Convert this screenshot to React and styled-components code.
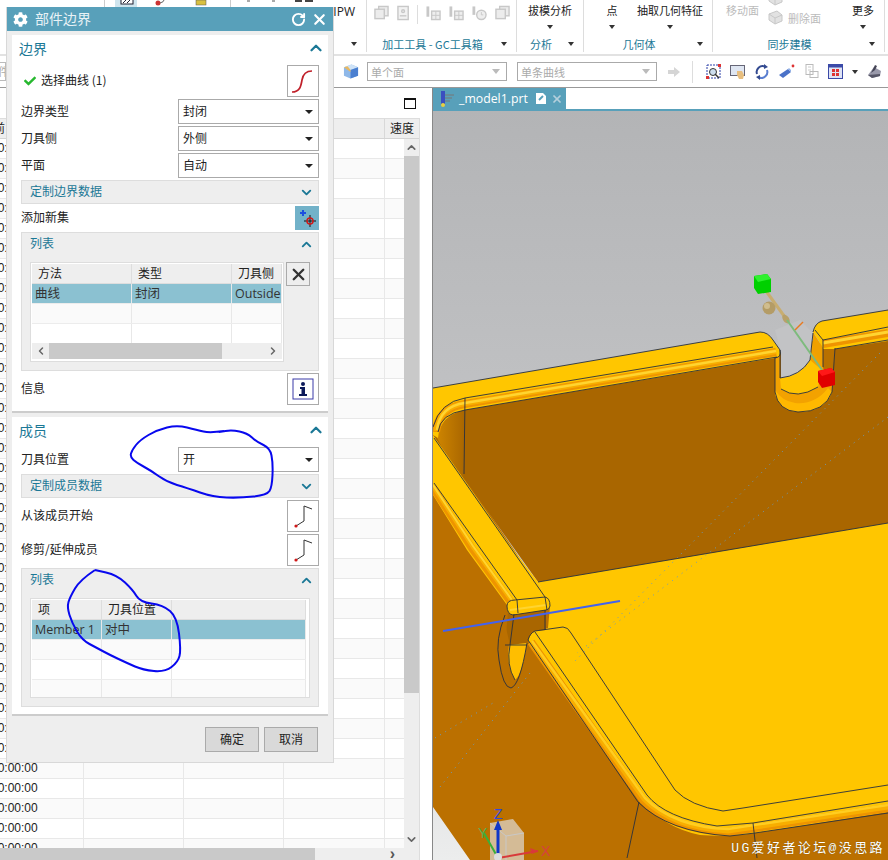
import React from 'react'
import styled, { createGlobalStyle } from 'styled-components'
import { FaCog, FaCheck } from 'react-icons/fa'
import { ChevronUp, ChevronDown, RotateCw, X } from 'lucide-react'

const CJK = `"Noto Sans CJK SC", "Open Sans", sans-serif`
const TEAL = '#58a0ba'
const HEAD = '#1b7896'

const smooth = pts => {
  let d = `M${pts[0][0]},${pts[0][1]}`
  for (let i = 1; i < pts.length - 1; i++) {
    const mx = (pts[i][0] + pts[i + 1][0]) / 2
    const my = (pts[i][1] + pts[i + 1][1]) / 2
    d += ` Q${pts[i][0]},${pts[i][1]} ${mx},${my}`
  }
  const last = pts[pts.length - 1]
  return d + ` L${last[0]},${last[1]}`
}

const ring1 = [[224,431],[210,433],[197,430],[177,425],[157,430],[140,440],[132,450],[130,457],[137,463],[150,470],[167,482],[187,488],[213,497],[240,498],[267,495],[272,487],[273,463],[270,448],[257,442],[247,433],[232,430],[219,432]]
const ring2 = [[95,570],[80,580],[70,597],[67,607],[72,623],[82,640],[97,648],[110,655],[127,663],[143,670],[165,672],[178,662],[181,650],[177,617],[163,605],[140,602],[133,590],[117,575],[95,570]]

function App() {
  const bgRows = Array.from({ length: 36 })
  return (
    <Page>
      <GlobalStyle />
      <Ribbon>
        <RibbonGroup $w={367}>
          <RibbonBody>
            <TopFragments width="250" height="7" viewBox="100 0 250 7">
              <rect x="115" y="0" width="22" height="7" fill="#cfe5ee" />
              <rect x="121" y="-3" width="12" height="7" fill="#fff" stroke="#223" />
              <path d="M123,3 L126,0 M127,3 L130,0" stroke="#223" />
              <circle cx="158" cy="3" r="2.5" fill="#c33" />
              <path d="M160,3 Q164,2 164,0" stroke="#666" fill="none" />
              <rect x="196" y="0" width="10" height="5" fill="#d8c040" stroke="#555" strokeWidth=".5" />
              <path d="M230.5,0 V7 M104.5,0 V7" stroke="#ccc" />
              <rect x="247" y="0" width="3" height="2" fill="#aaa" />
              <rect x="272" y="0" width="3" height="2" fill="#aaa" />
              <rect x="295" y="0" width="7" height="2" fill="#444" />
              <rect x="305" y="0" width="8" height="2" fill="#444" />
            </TopFragments>
            <IpwLabel>IPW</IpwLabel>
          </RibbonBody>
          <RibbonFoot><Caret /></RibbonFoot>
        </RibbonGroup>

        <RibbonGroup $w={150}>
          <RibbonIcons>
            <GhostPages /><GhostDoc /><IconSep /><GhostGrid /><GhostGrid /><GhostClock /><GhostPages />
          </RibbonIcons>
          <RibbonFoot><FootLabel>加工工具 - GC工具箱</FootLabel><Caret /></RibbonFoot>
        </RibbonGroup>

        <RibbonGroup $w={67}>
          <RibbonBody $center><RibbonCmd>拔模分析<Caret /></RibbonCmd></RibbonBody>
          <RibbonFoot><FootLabel>分析</FootLabel><Caret /></RibbonFoot>
        </RibbonGroup>

        <RibbonGroup $w={129}>
          <RibbonBody $pad={3}>
            <RibbonCmd $w={50}>点<Caret /></RibbonCmd>
            <RibbonCmd>抽取几何特征<Caret /></RibbonCmd>
          </RibbonBody>
          <RibbonFoot><FootLabel>几何体</FootLabel><Caret /></RibbonFoot>
        </RibbonGroup>

        <RibbonGroup $w={172}>
          <RibbonBody $pad={13}>
            <RibbonCmd $muted>移动面</RibbonCmd>
            <MutedStack>
              <MutedLine><GhostSmall /></MutedLine>
              <MutedLine><GhostSmall />删除面</MutedLine>
            </MutedStack>
            <RibbonCmd $ml={31}>更多<Caret /></RibbonCmd>
          </RibbonBody>
          <RibbonFoot><FootLabel>同步建模</FootLabel><Caret /></RibbonFoot>
        </RibbonGroup>
      </Ribbon>

      <Toolbar>
        <ClippedCombo>部件</ClippedCombo>
        <ToolCube width="16" height="17" viewBox="0 0 17 17">
          <path d="M1,4 L9,1 L16,4 L16,13 L8,16 L1,13 Z" fill="#8fb8e8" />
          <path d="M1,4 L8,7 L16,4 L9,1 Z" fill="#cfe3f7" />
          <path d="M8,7 L16,4 V13 L8,16 Z" fill="#4a7fd0" />
          <path d="M1,4 L5,3 L8,7 V9 Z" fill="#e8b860" />
        </ToolCube>
        <FilterCombo>单个面<ComboArrow /></FilterCombo>
        <FilterCombo>单条曲线<ComboArrow /></FilterCombo>
        <ToolArrow width="12" height="12" viewBox="0 0 12 12"><path d="M0,4 H6 V1 L12,6 L6,11 V8 H0 Z" fill="#d5d5d5" /></ToolArrow>
        <ToolSep />
        <ToolIcons>
          <svg width="15" height="15" viewBox="0 0 15 15"><rect x="1" y="1" width="13" height="13" fill="#fff" stroke="#2b3fa8" strokeDasharray="2 1" /><circle cx="7" cy="8" r="3.5" fill="#cde" stroke="#333" /><path d="M9,10 L13,14" stroke="#333" strokeWidth="1.5" /><rect x="12" y="0" width="3" height="3" fill="#d33" /><rect x="0" y="12" width="3" height="3" fill="#d33" /></svg>
          <svg width="15" height="15" viewBox="0 0 15 15"><rect x="0.5" y="1.5" width="14" height="10" fill="#dfe6f2" stroke="#667" /><path d="M7,7 L12,7 L14,11 L13,15 H9 L7,11 Z" fill="#e8bf80" /></svg>
          <svg width="16" height="16" viewBox="0 0 16 16" fill="none"><path d="M3,10 A6,6 0 0 1 11,2.5" stroke="#334a90" strokeWidth="2" /><path d="M13,6 A6,6 0 0 1 5,13.5" stroke="#5a7fd0" strokeWidth="2" /><path d="M10,0 L14,3 L10,5 Z M6,16 L2,13 L6,11 Z" fill="#334a90" /></svg>
          <svg width="16" height="15" viewBox="0 0 16 15"><path d="M0,11 L9,5 L12,8 L4,14 Z" fill="#4a72c8" /><path d="M9,5 L12,8 L12,6 L10,4 Z" fill="#8fb0e8" /><circle cx="14" cy="2" r="1.4" fill="#d33" /></svg>
          <svg width="15" height="15" viewBox="0 0 15 15" fill="none"><rect x="2" y="0.5" width="7" height="10" stroke="#bbb" /><rect x="6" y="7.5" width="8" height="6" stroke="#bbb" /><path d="M4,3 H7 M4,6 H7" stroke="#ccc" /></svg>
          <svg width="15" height="15" viewBox="0 0 15 15"><rect x="0.5" y="0.5" width="14" height="14" fill="#dfe4f5" stroke="#3b4aa8" /><rect x="1" y="1" width="13" height="2.5" fill="#3b4aa8" /><rect x="4" y="5" width="3" height="3" fill="#d33" /><rect x="8" y="5" width="3" height="3" fill="#d33" /><rect x="4" y="9" width="3" height="3" fill="#d33" /><rect x="8" y="9" width="3" height="3" fill="#d33" /></svg>
          <Caret />
          <svg width="15" height="15" viewBox="0 0 15 15"><path d="M1,11 L7,3 L14,7 L13,12 L5,14 Z" fill="#99a" /><path d="M4,9 L8,1 L10,2 L8,6 Z" fill="#445" /><path d="M1,11 L13,10 L13,12 L5,14 Z" fill="#556" /></svg>
        </ToolIcons>
      </Toolbar>

      <Main>
        <NavPanel>
          <PanelBar><WindowIcon /></PanelBar>
          <BgTable>
            <BgHeader>
              <BgHeadCell $clip>前</BgHeadCell><BgHeadCell /><BgHeadCell /><BgHeadCell /><BgHeadCell>速度</BgHeadCell>
            </BgHeader>
            <BgMiddle>
              <BgRows>
                {bgRows.map((_, i) => (
                  <BgRow key={i} $odd={i % 2 === 1}>
                    <BgCell><BgTime>00:00:00</BgTime></BgCell><BgCell /><BgCell /><BgCell /><BgCell />
                  </BgRow>
                ))}
              </BgRows>
              <VScroll>
                <ScrollBtn><ChevronUp size={13} strokeWidth={3} color="#666" /></ScrollBtn>
                <VThumb />
                <ScrollBtn $end><ChevronDown size={13} strokeWidth={3} color="#666" /></ScrollBtn>
              </VScroll>
            </BgMiddle>
            <HScroll>
              <HThumb $w={315} />
              <ScrollEnd>›</ScrollEnd>
            </HScroll>
          </BgTable>
        </NavPanel>

        <GraphicsPane>
          <TabStrip>
            <ModelTab>
              <svg width="17" height="18" viewBox="0 0 17 18"><rect x="3" y="1" width="4" height="13" fill="#3a4fc0" /><path d="M7,5 H16 M7,8 H14 M7,11 H12" stroke="#777" /><circle cx="5" cy="15" r="2" fill="#e8d040" /></svg>
              <TabName>_model1.prt</TabName>
              <TabDoc width="10" height="11" viewBox="0 0 10 11"><path d="M0,0 H7 L10,3 V11 H0 Z" fill="#fff" /><path d="M3,7 L7,3" stroke={TEAL} strokeWidth="2" /></TabDoc>
              <X size={12} strokeWidth={3.5} color="#b5d0dc" />
            </ModelTab>
          </TabStrip>
          <TabRule />
          <Scene>
            <Model />
            <Watermark>UG爱好者论坛@没思路</Watermark>
          </Scene>
        </GraphicsPane>
      </Main>

      <Dialog>
        <TitleBar>
          <FaCog size={15} color="#fff" />
          <DialogTitle>部件边界</DialogTitle>
          <TitleActions>
            <RotateCw size={15} strokeWidth={3} color="#fff" />
            <X size={17} strokeWidth={3} color="#fff" />
          </TitleActions>
        </TitleBar>
        <DialogBody>
          <Section $pad={6}>
            <SectionHead><span>边界</span><SectionChevron size={18} strokeWidth={3} color={HEAD} /></SectionHead>
            <PickRow>
              <Selected><FaCheck size={12} color="#27b82f" /><RowText>选择曲线 (1)</RowText></Selected>
              <IconButton><CurveIcon /></IconButton>
            </PickRow>
            <FieldRow label="边界类型" value="封闭" />
            <FieldRow label="刀具侧" value="外侧" />
            <FieldRow label="平面" value="自动" />
            <SubHead><RowText>定制边界数据</RowText><ChevronDown size={15} strokeWidth={3} color={HEAD} /></SubHead>
            <AddRow>
              <RowText>添加新集</RowText>
              <AddButton>
                <svg width="20" height="20" viewBox="0 0 20 20" fill="none">
                  <path d="M3,5 H9 M6,2 V8" stroke="#1c4fe0" strokeWidth="2" />
                  <path d="M13,7 V19 M7,13 H19" stroke="#111" />
                  <circle cx="13" cy="13" r="3" stroke="#d01818" strokeWidth="1.5" />
                </svg>
              </AddButton>
            </AddRow>
            <ListGroup>
              <GroupHead><RowText>列表</RowText><ChevronUp size={15} strokeWidth={3} color={HEAD} /></GroupHead>
              <ListBody>
                <DataTable
                  $w={254}
                  cols="100px 100px 50px"
                  head={['方法', '类型', '刀具侧']}
                  rows={[['曲线', '封闭', 'Outside'], ['', '', ''], ['', '', '']]}
                  scroll
                />
                <DeleteButton><X size={19} strokeWidth={3} color="#333" /></DeleteButton>
              </ListBody>
            </ListGroup>
            <PickRow>
              <RowText>信息</RowText>
              <IconButton>
                <svg width="22" height="22" viewBox="0 0 22 22">
                  <rect x="1" y="1" width="20" height="20" fill="#fff" stroke="#3b3ba8" />
                  <circle cx="11" cy="6" r="2" fill="#0c1a5a" />
                  <path d="M8,9 H13 V16 H15 V18 H7 V16 H9.5 V11 H8 Z" fill="#0c1a5a" />
                </svg>
              </IconButton>
            </PickRow>
          </Section>
          <Section $pad={7}>
            <SectionHead><span>成员</span><SectionChevron size={18} strokeWidth={3} color={HEAD} /></SectionHead>
            <FieldRow label="刀具位置" value="开" />
            <SubHead><RowText>定制成员数据</RowText><ChevronDown size={15} strokeWidth={3} color={HEAD} /></SubHead>
            <PickRow><RowText>从该成员开始</RowText><IconButton><StepIcon /></IconButton></PickRow>
            <PickRow><RowText>修剪/延伸成员</RowText><IconButton><StepIcon /></IconButton></PickRow>
            <ListGroup>
              <GroupHead><RowText>列表</RowText><ChevronUp size={15} strokeWidth={3} color={HEAD} /></GroupHead>
              <ListBody>
                <DataTable
                  $w={280}
                  cols="70px 70px 134px"
                  head={['项', '刀具位置', '']}
                  rows={[['Member 1', '对中', ''], ['', '', ''], ['', '', ''], ['', '', '']]}
                />
              </ListBody>
            </ListGroup>
          </Section>
        </DialogBody>
        <DialogFoot>
          <FootButton>确定</FootButton>
          <FootButton>取消</FootButton>
        </DialogFoot>
      </Dialog>

      <Scribble width="888" height="860" viewBox="0 0 888 860" fill="none">
        <path d={smooth(ring1)} />
        <path d={smooth(ring2)} />
      </Scribble>
    </Page>
  )
}

export default App

function FieldRow({ label, value }) {
  return (
    <Field>
      <RowText>{label}</RowText>
      <SelectBox>{value}<SelectCaret /></SelectBox>
    </Field>
  )
}

function DataTable({ $w, cols, head, rows, scroll }) {
  return (
    <TableFrame $w={$w}>
      <TableRow $cols={cols} $head>
        {head.map((h, i) => <HeadCell key={i}>{h}</HeadCell>)}
      </TableRow>
      {rows.map((r, i) => (
        <TableRow key={i} $cols={cols} $sel={i === 0} $odd={i % 2 === 1}>
          {r.map((c, j) => <BodyCell key={j}>{c}</BodyCell>)}
        </TableRow>
      ))}
      {scroll && (
        <TableScroll>
          <ChevronDown size={12} strokeWidth={3} color="#666" style={{ transform: 'rotate(90deg)' }} />
          <HThumb $w={173} />
          <ScrollRight><ChevronDown size={12} strokeWidth={3} color="#666" style={{ transform: 'rotate(-90deg)' }} /></ScrollRight>
        </TableScroll>
      )}
    </TableFrame>
  )
}

function GhostPages() {
  return (
    <svg width="16" height="16" viewBox="0 0 16 16" fill="#ececec" stroke="#c8c8c8" strokeWidth="1.5">
      <rect x="5" y="1" width="10" height="10" />
      <rect x="1" y="4" width="10" height="10" />
    </svg>
  )
}

function GhostDoc() {
  return (
    <svg width="13" height="16" viewBox="0 0 13 16" fill="#f2f2f2" stroke="#c8c8c8" strokeWidth="1.5">
      <rect x="1" y="1" width="11" height="14" />
      <circle cx="6.5" cy="6" r="1.5" />
      <path d="M3,11 H10" />
    </svg>
  )
}

function GhostGrid() {
  return (
    <svg width="16" height="16" viewBox="0 0 16 16" fill="none" stroke="#c8c8c8" strokeWidth="1.5">
      <path d="M2,1 V12" strokeWidth="3" />
      <rect x="6" y="6" width="9" height="9" fill="#eee" />
      <path d="M6,10.5 H15 M10.5,6 V15" strokeWidth="1" />
    </svg>
  )
}

function GhostClock() {
  return (
    <svg width="16" height="16" viewBox="0 0 16 16" fill="none" stroke="#c8c8c8" strokeWidth="1.5">
      <path d="M2,1 V10" strokeWidth="3" />
      <circle cx="10" cy="10" r="5" fill="#eee" />
      <path d="M10,7 V10 H12" strokeWidth="1" />
    </svg>
  )
}

function GhostSmall() {
  return (
    <GhostSmallSvg width="15" height="15" viewBox="0 0 15 15" fill="#e2e2e2" stroke="#c8c8c8">
      <path d="M1,4 L9,1 L14,5 L14,11 L7,14 L1,10 Z" />
      <path d="M1,4 L7,8 L14,5 M7,8 V14" />
    </GhostSmallSvg>
  )
}

function CurveIcon() {
  return (
    <svg width="24" height="24" viewBox="0 0 24 24" fill="none">
      <path d="M1,23 C9,23 10,17 11,11 C12,5 15,2 21,2" stroke="#c0202a" strokeWidth="1.7" />
    </svg>
  )
}

function StepIcon() {
  return (
    <svg width="24" height="24" viewBox="0 0 24 24" fill="none">
      <path d="M5,22 L13,17 V2 L21,5" stroke="#333" strokeWidth="1" />
      <circle cx="5" cy="22" r="1.6" fill="#d01818" />
    </svg>
  )
}

function Model() {
  const line = '#28303f'
  const wall = '#a96600'
  const outer = '#bb7000'
  const yellow = '#ffc600'
  return (
    <SceneSvg viewBox="433 111 455 749" preserveAspectRatio="none">
      <defs>
        <linearGradient id="bg" x1="0" y1="0" x2="0" y2="1">
          <stop offset="0" stopColor="#b3b4b6" />
          <stop offset=".5" stopColor="#c4c5c7" />
          <stop offset="1" stopColor="#eceded" />
        </linearGradient>
        <linearGradient id="corner" x1="0" y1="0" x2="1" y2="0">
          <stop offset="0" stopColor="#cf8600" />
          <stop offset="1" stopColor="#a96600" />
        </linearGradient>
      </defs>
      <rect x="433" y="111" width="455" height="749" fill="url(#bg)" />

      {/* walls */}
      <path d="M433,430 L548,600 L640,798 L888,790 V860 H470 L433,807 Z" fill={outer} />
      <path d="M433,435 L465,405 L888,335 V530 L538,582 Z" fill={wall} />
      <path d="M436,436 Q440,414 465,410 L464,490 Z" fill="url(#corner)" />

      {/* floor and front rim */}
      <path d="M538,582 L888,523 V812 L755,833 Q730,837 700,835 Q665,828 640,800 L528,640 Q530,633 535,631 L548,628 L550,606 Z" fill={yellow} />
      <path d="M531,642 L643,800 Q672,830 728,832 L888,808" fill="none" stroke="#ee9400" strokeWidth="8" />
      <path d="M531,642 L644,799 Q673,828 728,831 L888,807" fill="none" stroke="#f8ae00" strokeWidth="5" />
      <path d="M532,641 L645,798 Q674,827 728,829 L888,805" fill="none" stroke="#ffcd20" strokeWidth="2.5" />

      {/* notch in the back wall */}
      <path d="M775,357 L775,392 Q778,411 798,412 Q825,412 832,392 L835,348 L810,340 L810,360 Q800,376 780,378 L780,356 Z" fill="#f3a200" />
      <path d="M781,389 Q797,400 818,387 L822,370 L810,360 Q800,376 780,378 Z" fill="#ffc400" />
      <path d="M775,395 Q782,411 798,412 Q825,412 832,392 L828,388 Q815,405 795,403 Q782,401 775,390 Z" fill="#ffb800" />
      <path d="M781,352 V378 Q800,376 810,360 L813,333 L800,320 L775,330 Z" fill="#c2c3c5" />
      <path d="M823,349 H835 L833,383 L826,372 L823,368 Z" fill="#b87000" />

      {/* back rim */}
      <path d="M433,388 L760,332 Q768,332 773,340 L780,350 Q782,357 775,358 L465,410 Q440,415 438,438 L433,435 Z" fill={yellow} />
      <path d="M436,432 Q438,408 465,404 L776,352" fill="none" stroke="#ee9400" strokeWidth="8" />
      <path d="M436,431 Q439,407 465,403.5 L776,351.5" fill="none" stroke="#f8ae00" strokeWidth="5" />
      <path d="M437,430 Q440,406 465,403 L776,351" fill="none" stroke="#ffd430" strokeWidth="2.5" />
      <path d="M813,332 Q815,323 822,321 L888,310 V341 L835,349 L823,349 Q820,342 813,332 Z" fill={yellow} />
      <path d="M823,344 L888,333" stroke="#ee9400" strokeWidth="8" />
      <path d="M823,343 L888,332" stroke="#ffd430" strokeWidth="3" />
      <path d="M813,332 L813,350 L823,365 V348 Z" fill="#f0a000" />

      {/* left rim */}
      <path d="M433,435 L512,548 L538,582 L548,600 L513,600 L507,605 L467,550 L433,495 Z" fill={yellow} />
      <path d="M433,488 L472,549 L511,603" fill="none" stroke="#ee9400" strokeWidth="7" />
      <path d="M433,486 L473,547 L512,601" fill="none" stroke="#f8ae00" strokeWidth="4.5" />
      <path d="M433,485 L473,546 L512,600" fill="none" stroke="#ffd430" strokeWidth="2" />

      {/* cut in the front wall */}
      <path d="M508,612 L546,608 L546,630 L535,631 Q529,634 527,645 L505,645 Z" fill={wall} />
      <path d="M503,615 Q495,640 499,660 Q503,688 511,688 Q520,685 527,643 L510,645 Z" fill={outer} />
      <path d="M509,645 Q506,665 515,680 Q522,675 527,643 Z" fill="#ffbe00" />
      <path d="M507,606 Q507,600 515,600 L545,597 Q550,598 550,606 Q549,610 546,610 L513,615 Q507,614 507,606 Z" fill={yellow} />
      <path d="M510,610 L546,605" stroke="#ffd430" strokeWidth="2" />

      {/* hidden edges */}
      <g fill="none" stroke="#6a9cc0" strokeWidth="1" strokeDasharray="1 5">
        <path d="M880,353 L573,663" />
        <path d="M888,417 L577,653" />
        <path d="M440,787 L530,673" />
        <path d="M435,738 L493,703" />
      </g>

      {/* edges */}
      <g fill="none" stroke={line} strokeWidth=".9">
        <path d="M433,388 L760,332 Q768,332 773,340 L780,350 Q782,357 775,358" />
        <path d="M433,427 Q440,402 465,398 L773,347" />
        <path d="M438,432 Q440,414 465,410 L777,357" />
        <path d="M465,398 L464,474" />
        <path d="M775,357 L775,392 Q778,411 798,412 Q825,412 832,392 L835,348" />
        <path d="M780,350 V378 Q800,376 810,360 L813,333" />
        <path d="M781,389 Q797,400 818,387" />
        <path d="M813,332 Q815,323 822,321 L888,310" />
        <path d="M815,330 L823,340 L888,327" />
        <path d="M823,340 V367" />
        <path d="M835,349 L888,340" />
        <path d="M434,438 L545,597" />
        <path d="M434,483 L517,600" />
        <path d="M507,606 Q507,600 515,600 L545,597 Q550,598 550,606 Q549,610 546,610 L513,615 Q507,614 507,606" />
        <path d="M517,600 L518,613 M545,597 L547,610" />
        <path d="M545,610 V630" />
        <path d="M514,614 L510,645 Q506,665 515,680" />
        <path d="M505,615 Q495,640 499,660 Q503,688 511,688 Q520,685 527,643" />
        <path d="M505,645 H527" />
        <path d="M538,582 L888,523" />
        <path d="M528,640 Q530,633 535,631 L563,627 Q568,627 571,633 L675,790 Q690,806 723,811 L743,808 L888,785" />
        <path d="M535,632 L647,795 Q665,818 717,826 L753,823 L888,801" />
        <path d="M528,640 L638,802 Q668,832 730,836 L755,833 L888,813" />
        <path d="M639,802 L627,858 M753,823 L757,858" />
      </g>

      {/* blue section line */}
      <path d="M443,631 L620,601" stroke="#4262f0" strokeWidth="2" />

      {/* handles */}
      <path d="M766,291 L787,320" stroke="#c8ad70" strokeWidth="3" />
      <ellipse cx="786" cy="319" rx="3" ry="5" transform="rotate(-35 786 319)" fill="#b8a068" />
      <path d="M787,320 L822,370" stroke="#7dbb7d" strokeWidth="2" />
      <path d="M795,330 L803,322" stroke="#e87a20" strokeWidth="1.5" />
      <circle cx="769" cy="308" r="6.5" fill="#b49c66" />
      <circle cx="767" cy="306" r="3" fill="#d0bd8e" />
      <path d="M754,276 L767,274 L771,279 V292 L758,294 L754,288 Z" fill="#00d000" />
      <path d="M754,276 L767,274 L771,279 L758,282 Z" fill="#30f030" />
      <path d="M818,371 L831,368 L835,372 V385 L822,388 L818,382 Z" fill="#e00000" />
      <path d="M818,371 L831,368 L835,372 L822,376 Z" fill="#ff1818" />

      {/* triad */}
      <path d="M490,823 L513,819 L524,833 V860 H490 Z" fill="#d8c8b0" opacity=".85" />
      <path d="M490,823 L506,836 L524,833 M506,836 V860" stroke="#c8c8c8" fill="none" />
      <path d="M498,858 L484,833" stroke="#3ab03a" strokeWidth="2" />
      <path d="M498,858 L538,851" stroke="#d83a3a" strokeWidth="2" />
      <path d="M498,858 V826" stroke="#1038c8" strokeWidth="3" />
      <path d="M498,820 L502,830 H494 Z" fill="#1038c8" />
      <path d="M538,851 L530,848 L532,854 Z" fill="#d83a3a" />
      <circle cx="498" cy="857" r="4" fill="#ddd" />
      <TriadText x="494" y="819" fill="#3048e0">Z</TriadText>
      <TriadText x="478" y="838" fill="#50b050">Y</TriadText>
      <TriadText x="541" y="856" fill="#d84040">X</TriadText>
    </SceneSvg>
  )
}

const GlobalStyle = createGlobalStyle`
html,body{
  margin:0;
  padding:0;
  background:#fff;
}
*{box-sizing:border-box;}
`

const Page = styled.div`
position:relative;
width:888px;
height:860px;
overflow:hidden;
display:flex;
flex-direction:column;
background:#fff;
color:#222;
font-family:${CJK};
font-size:12px;
`

const Ribbon = styled.div`
display:flex;
height:56px;
flex:none;
border-bottom:2px solid #e2e2e2;
`
const RibbonGroup = styled.div`
width:${p => p.$w}px;
flex:none;
display:flex;
flex-direction:column;
border-right:1px solid #ddd;
margin-bottom:2px;
`
const RibbonBody = styled.div`
position:relative;
flex:1;
display:flex;
justify-content:${p => (p.$center ? 'space-around' : p.$pad ? 'flex-start' : 'flex-end')};
padding:2px 0 0 ${p => p.$pad || 0}px;
`
const TopFragments = styled.svg`
position:absolute;
top:0;
left:100px;
`
const IpwLabel = styled.span`
font-family:"Open Sans",sans-serif;
margin:1px 11px 0 0;
`
const RibbonIcons = styled.div`
flex:1;
display:flex;
gap:8px;
padding:5px 6px 0 7px;
align-items:flex-start;
`
const GhostSmallSvg = styled.svg`
flex:none;
margin-right:5px;
`
const IconSep = styled.span`
width:1px;
height:19px;
background:#ddd;
`
const RibbonCmd = styled.div`
display:flex;
flex-direction:column;
align-items:center;
gap:7px;
width:${p => (p.$w ? `${p.$w}px` : 'auto')};
margin-left:${p => p.$ml || 0}px;
color:${p => (p.$muted ? '#bbb' : '#222')};
font-size:11px;
`
const MutedStack = styled.div`
display:flex;
flex-direction:column;
margin:-13px 0 0 9px;
color:#bbb;
font-size:11px;
`
const MutedLine = styled.div`
display:flex;
align-items:center;
height:19px;
`
const RibbonFoot = styled.div`
height:17px;
display:flex;
align-items:center;
justify-content:flex-end;
position:relative;
padding-right:9px;
`
const FootLabel = styled.span`
position:absolute;
left:0;
right:18px;
text-align:center;
color:${HEAD};
font-size:11px;
white-space:nowrap;
`
const Caret = styled.span`
display:block;
flex:none;
width:0;
height:0;
border-left:3.5px solid transparent;
border-right:3.5px solid transparent;
border-top:4px solid #333;
`

const Toolbar = styled.div`
height:32px;
flex:none;
display:flex;
align-items:center;
border-bottom:1px solid #999;
`
const ClippedCombo = styled.div`
width:20px;
height:19px;
margin:0 0 0 -14px;
border:1px solid #bbb;
color:#aaa;
line-height:17px;
font-size:11px;
overflow:hidden;
white-space:nowrap;
`
const ToolCube = styled.svg`
margin:0 8px 0 337px;
flex:none;
`
const FilterCombo = styled.div`
width:140px;
height:19px;
flex:none;
margin-right:10px;
padding:0 6px 0 3px;
border:1px solid #aaa;
display:flex;
justify-content:space-between;
align-items:center;
color:#aaa;
font-size:11px;
`
const ComboArrow = styled.span`
width:0;
height:0;
border-left:4px solid transparent;
border-right:4px solid transparent;
border-top:5px solid #bbb;
`
const ToolArrow = styled.svg`
flex:none;
margin-left:1px;
`
const ToolSep = styled.span`
width:1px;
height:22px;
background:#ddd;
margin:0 13px 0 12px;
`
const ToolIcons = styled.div`
display:flex;
align-items:center;
gap:9px;
`

const Main = styled.div`
flex:1;
display:flex;
min-height:0;
`
const NavPanel = styled.div`
width:433px;
flex:none;
display:flex;
flex-direction:column;
padding-right:12px;
border-right:1px solid #888;
`
const PanelBar = styled.div`
height:30px;
flex:none;
display:flex;
justify-content:flex-end;
align-items:center;
padding-right:4px;
`
const WindowIcon = styled.span`
width:12px;
height:11px;
border:1px solid #111;
border-top-width:2px;
`
const BgTable = styled.div`
flex:1;
min-height:0;
display:flex;
flex-direction:column;
border-right:1px solid #ddd;
border-top:1px solid #ddd;
`
const BgHeader = styled.div`
height:20px;
flex:none;
display:grid;
grid-template-columns:84px 100px 100px 101px 35px;
background:#eee;
border-bottom:1px solid #d4d4d4;
`
const BgHeadCell = styled.div`
border-right:1px solid #d8d8d8;
font-size:12px;
line-height:18px;
padding-left:${p => (p.$clip ? 0 : 5)}px;
text-indent:${p => (p.$clip ? -7 : 0)}px;
overflow:hidden;
&:last-child{border-right:none;}
`
const BgMiddle = styled.div`
flex:1;
min-height:0;
display:flex;
`
const BgRows = styled.div`
flex:1;
overflow:hidden;
`
const BgRow = styled.div`
height:20px;
display:grid;
grid-template-columns:84px 100px 100px 101px 20px;
background:${p => (p.$odd ? '#fafafa' : '#fff')};
border-bottom:1px solid #e8e8e8;
`
const BgCell = styled.div`
border-right:1px solid #e8e8e8;
overflow:hidden;
&:last-child{border-right:none;}
`
const BgTime = styled.span`
display:block;
margin-left:-9px;
font:12px/19px "Liberation Sans",sans-serif;
color:#222;
`
const VScroll = styled.div`
width:15px;
flex:none;
display:flex;
flex-direction:column;
background:#eee;
`
const ScrollBtn = styled.div`
height:${p => (p.$end ? 'auto' : '17px')};
margin-top:${p => (p.$end ? 'auto' : 0)};
padding-bottom:${p => (p.$end ? 2 : 0)}px;
display:flex;
align-items:center;
justify-content:center;
`
const VThumb = styled.div`
height:537px;
background:#c9c9c9;
`
const HScroll = styled.div`
height:12px;
flex:none;
display:flex;
align-items:center;
justify-content:space-between;
background:#eee;
`
const HThumb = styled.div`
width:${p => p.$w}px;
height:100%;
flex:none;
background:#c9c9c9;
`
const ScrollEnd = styled.span`
margin-right:24px;
font:bold 16px/10px "Liberation Sans",sans-serif;
color:#555;
`

const GraphicsPane = styled.div`
flex:1;
min-width:0;
display:flex;
flex-direction:column;
`
const TabStrip = styled.div`
height:21px;
flex:none;
display:flex;
`
const ModelTab = styled.div`
width:133px;
display:flex;
align-items:center;
gap:4px;
padding:0 0 0 5px;
background:${TEAL};
color:#fff;
`
const TabName = styled.span`
font:12.3px "Open Sans",sans-serif;
white-space:nowrap;
`
const TabDoc = styled.svg`
flex:none;
margin:0 1px 0 4px;
`
const TabRule = styled.div`
height:2px;
flex:none;
background:${TEAL};
`
const Scene = styled.div`
position:relative;
flex:1;
min-height:0;
`
const SceneSvg = styled.svg`
display:block;
width:100%;
height:100%;
`
const TriadText = styled.text`
font:14px "Liberation Sans",sans-serif;
`
const Watermark = styled.div`
position:absolute;
right:3px;
bottom:4px;
color:#fff;
font:13px "Liberation Mono","Noto Sans CJK SC",monospace;
letter-spacing:2.4px;
white-space:nowrap;
text-shadow:0 0 1px #6a4a00;
`

const Dialog = styled.div`
position:absolute;
left:6px;
top:7px;
width:328px;
height:756px;
display:flex;
flex-direction:column;
background:#eee;
border:1px solid #d8d8d8;
border-top:none;
`
const TitleBar = styled.div`
height:24px;
flex:none;
display:flex;
align-items:center;
padding:0 5px 0 6px;
background:${TEAL};
`
const DialogTitle = styled.span`
margin-left:7px;
padding-bottom:2px;
color:#e8f2f6;
font-size:14px;
`
const TitleActions = styled.div`
margin-left:auto;
display:flex;
align-items:center;
gap:5px;
`
const DialogBody = styled.div`
display:flex;
flex-direction:column;
gap:4px;
padding:4px 5px 0;
`
const Section = styled.section`
display:flex;
flex-direction:column;
gap:2px;
padding:0 9px ${p => p.$pad}px;
background:#fff;
border-bottom:2px solid #ccc;
`
const SectionHead = styled.div`
height:28px;
display:flex;
align-items:center;
justify-content:space-between;
margin-left:-2px;
padding-bottom:3px;
color:${HEAD};
font-size:14px;
`
const SectionChevron = styled(ChevronUp)`
margin-right:-6px;
`
const RowText = styled.span`
display:block;
margin-top:-3px;
white-space:nowrap;
`
const PickRow = styled.div`
height:32px;
display:flex;
align-items:center;
justify-content:space-between;
`
const Selected = styled.span`
display:flex;
align-items:center;
gap:5px;
padding-left:3px;
`
const IconButton = styled.div`
width:32px;
height:32px;
display:flex;
align-items:center;
justify-content:center;
background:#fff;
border:1px solid #aaa;
`
const Field = styled.div`
height:25px;
display:flex;
align-items:center;
justify-content:space-between;
`
const SelectBox = styled.div`
width:141px;
height:25px;
display:flex;
align-items:center;
justify-content:space-between;
padding:0 5px 2px 4px;
background:#fff;
border:1px solid #aaa;
`
const SelectCaret = styled.span`
width:0;
height:0;
margin-top:2px;
border-left:4px solid transparent;
border-right:4px solid transparent;
border-top:4px solid #222;
`
const SubHead = styled.div`
height:24px;
display:flex;
align-items:center;
justify-content:space-between;
padding:0 4px 0 8px;
background:#eee;
border:1px solid #ddd;
color:${HEAD};
`
const AddRow = styled.div`
height:24px;
display:flex;
align-items:center;
justify-content:space-between;
`
const AddButton = styled.div`
width:24px;
height:24px;
display:flex;
align-items:center;
justify-content:center;
background:#72b2c9;
`
const ListGroup = styled.div`
height:139px;
display:flex;
flex-direction:column;
background:#eee;
border:1px solid #ddd;
`
const GroupHead = styled.div`
height:29px;
flex:none;
display:flex;
align-items:center;
justify-content:space-between;
padding:0 4px 7px 8px;
color:${HEAD};
`
const ListBody = styled.div`
display:flex;
gap:2px;
padding-left:8px;
align-items:flex-start;
`
const TableFrame = styled.div`
width:${p => p.$w}px;
height:100px;
flex:none;
padding:1px;
background:#fff;
border:1px solid #ddd;
overflow:hidden;
`
const TableRow = styled.div`
height:20px;
width:max-content;
display:grid;
grid-template-columns:${p => p.$cols};
background:${p => (p.$head ? '#eee' : p.$sel ? '#8bc1d1' : p.$odd ? '#fafafa' : '#fff')};
border-bottom:1px solid ${p => (p.$head ? '#ddd' : '#ececec')};
`
const HeadCell = styled.div`
padding-left:6px;
line-height:17px;
border-right:1px solid #ddd;
overflow:hidden;
white-space:nowrap;
`
const BodyCell = styled.div`
padding-left:3px;
line-height:20px;
font-family:"Open Sans","Noto Sans CJK SC",sans-serif;
font-size:12.5px;
color:#333;
border-right:1px solid #e8e8e8;
overflow:hidden;
white-space:nowrap;
`
const TableScroll = styled.div`
height:16px;
margin-top:-1px;
display:flex;
align-items:center;
gap:2px;
padding-left:3px;
background:#eee;
`
const ScrollRight = styled.span`
display:flex;
margin:0 3px 0 auto;
`
const DeleteButton = styled.div`
width:24px;
height:24px;
flex:none;
display:flex;
align-items:center;
justify-content:center;
background:#eee;
border:1px solid #aaa;
`
const DialogFoot = styled.div`
display:flex;
justify-content:flex-end;
gap:5px;
padding:11px 15px 0 0;
`
const FootButton = styled.div`
width:54px;
height:25px;
display:flex;
align-items:center;
justify-content:center;
padding-bottom:2px;
background:#d9d9d9;
border:1px solid #aaa;
`
const Scribble = styled.svg`
position:absolute;
left:0;
top:0;
pointer-events:none;
stroke:#0808ee;
stroke-width:2;
`
